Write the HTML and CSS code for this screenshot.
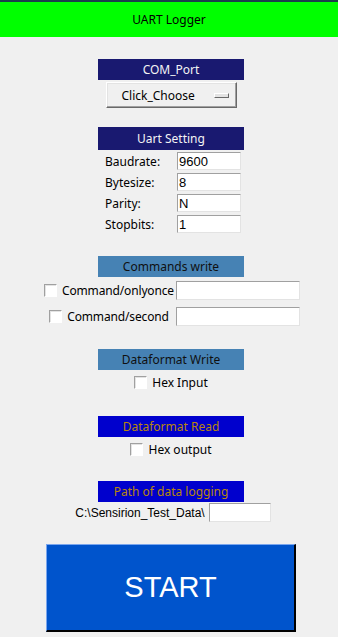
FILE: index.html
```html
<!DOCTYPE html>
<html lang="en">
<head>
    <meta charset="UTF-8">
    <meta name="viewport" content="width=device-width, initial-scale=1.0">
    <title>UART Logger</title>
    <link rel="stylesheet" href="styles.css">
</head>
<body>
    <header class="titlebar">UART Logger</header>

    <main class="app">
        <!-- Puerto COM -->
        <section class="group group-com">
            <div class="caption caption-navy">COM_Port</div>
            <button class="menu-btn" type="button">Click_Choose <span class="indicator"></span></button>
        </section>

        <!-- Configuracion UART -->
        <section class="group group-uart">
            <div class="caption caption-navy caption-tall">Uart Setting</div>
            <div class="uart-grid">
                <label>Baudrate:</label><input class="entry" type="text" value="9600">
                <label>Bytesize:</label><input class="entry" type="text" value="8">
                <label>Parity:</label><input class="entry" type="text" value="N">
                <label>Stopbits:</label><input class="entry" type="text" value="1">
            </div>
        </section>

        <!-- Comandos -->
        <section class="group group-cmd">
            <div class="caption caption-steel">Commands write</div>
            <div class="cmd-grid">
                <label class="check"><span class="box"></span>Command/onlyonce</label>
                <input class="entry entry-wide" type="text">
                <label class="check"><span class="box"></span>Command/second</label>
                <input class="entry entry-wide" type="text">
            </div>
        </section>

        <section class="group group-write">
            <div class="caption caption-steel">Dataformat Write</div>
            <label class="check check-row"><span class="box"></span>Hex Input</label>
        </section>

        <section class="group group-read">
            <div class="caption caption-blue">Dataformat Read</div>
            <label class="check check-row"><span class="box"></span>Hex output</label>
        </section>

        <section class="group group-path">
            <div class="caption caption-blue">Path of data logging</div>
            <div class="path-row">
                <span class="path-text">C:\Sensirion_Test_Data\</span>
                <input class="entry entry-path" type="text">
            </div>
        </section>

        <button class="start-btn" type="button">START</button>
    </main>
</body>
</html>
```

FILE: styles.css
```css
body {
    margin: 0;
    background-color: #f0f0f0;
    font-family: "Noto Sans", "Open Sans", sans-serif;
    font-size: 12px;
    color: #000;
}

.titlebar {
    border-top: 2px solid #1d3c4c;
    background-color: #00ff00;
    height: 35px;
    line-height: 35px;
    text-align: center;
    font-size: 12px;
}

.app {
    display: flex;
    flex-direction: column;
    align-items: center;
    padding-left: 4px;
}

.group {
    display: flex;
    flex-direction: column;
    align-items: center;
}

.caption {
    width: 146px;
    height: 21px;
    line-height: 21px;
    text-align: center;
}

.caption-tall {
    height: 23px;
    line-height: 23px;
}

.caption-navy {
    background-color: #191970;
    color: #f4f4f4;
}

.caption-steel {
    background-color: #4682b4;
    color: #101010;
}

.caption-blue {
    background-color: #0000cd;
    color: #b8860b;
}

.group-com { margin-top: 22px; }
.group-uart { margin-top: 19px; }
.group-cmd { margin-top: 23px; }
.group-write { margin-top: 23px; }
.group-read { margin-top: 25px; }
.group-path { margin-top: 23px; }

/* boton tipo menu */
.menu-btn {
    margin-top: 2px;
    width: 131px;
    height: 26px;
    display: flex;
    align-items: center;
    justify-content: space-between;
    background-color: #f0f0f0;
    border: 1px solid;
    border-color: #ffffff #696969 #696969 #ffffff;
    box-shadow: inset -1px -1px 0 #a0a0a0, inset 1px 1px 0 #e3e3e3;
    font-family: inherit;
    font-size: 12px;
    padding: 0 7px 0 15px;
}

.indicator {
    width: 15px;
    height: 5px;
    box-sizing: border-box;
    border: 1px solid;
    border-color: #ffffff #696969 #696969 #ffffff;
    background-color: #e3e3e3;
}

.entry {
    box-sizing: border-box;
    height: 18px;
    padding: 0 1px;
    background-color: #fff;
    border: 1px solid;
    border-color: #a0a0a0 #e3e3e3 #e3e3e3 #a0a0a0;
    font-family: "Liberation Sans", Arial, sans-serif;
    font-size: 13px;
    outline: none;
}

.uart-grid {
    width: 146px;
    box-sizing: border-box;
    padding: 2px 3px 0 7px;
    display: grid;
    grid-template-columns: 1fr 64px;
    row-gap: 3px;
    align-items: center;
}

.uart-grid .entry {
    width: 64px;
}

.cmd-grid {
    margin-top: 4px;
    display: grid;
    grid-template-columns: 134px 124px;
    row-gap: 7px;
    align-items: center;
}

.cmd-grid .check {
    justify-self: center;
    letter-spacing: -0.15px;
}

.entry-wide {
    width: 124px;
    height: 19px;
}

.check {
    display: flex;
    align-items: center;
    gap: 5px;
}

.check-row {
    margin-top: 4px;
}

.box {
    width: 13px;
    height: 13px;
    box-sizing: border-box;
    background-color: #fff;
    border: 1px solid;
    border-color: #a0a0a0 #ffffff #ffffff #a0a0a0;
    box-shadow: inset 1px 1px 0 #e3e3e3;
}

.path-row {
    display: flex;
    align-items: center;
    gap: 4px;
    margin-top: 1px;
    margin-left: 4px;
}

.path-text {
    font-family: "Liberation Sans", Arial, sans-serif;
    font-size: 12px;
}

.entry-path {
    width: 62px;
    height: 19px;
}

.start-btn {
    margin-top: 22px;
    width: 250px;
    height: 88px;
    background-color: #0054cc;
    color: #fff;
    border: 1px solid;
    border-color: #7aa6ee #000 #000 #7aa6ee;
    border-right-width: 2px;
    border-bottom-width: 2px;
    font-family: "Liberation Sans", Arial, sans-serif;
    font-size: 29px;
}
```
